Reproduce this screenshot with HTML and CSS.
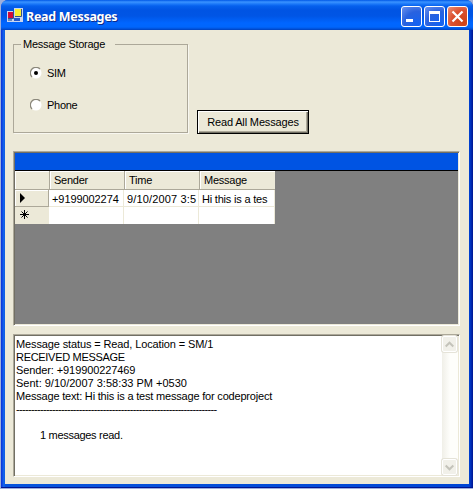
FILE: index.html
```html
<!DOCTYPE html>
<html lang="en">
<head>
<meta charset="utf-8">
<title>Read Messages</title>
<link rel="stylesheet" href="styles.css">
</head>
<body>
<div class="window">
  <header class="titlebar">
    <svg class="app-icon" width="16" height="16" viewBox="0 0 16 16">
      <path fill="#c9d5ef" d="M0 3h7V0h9v14H0z"/>
      <path fill="#d20a38" d="M1 4h5v6H1z"/>
      <path fill="#f8ee32" d="M8 1h6v7H8z"/>
      <path fill="#2558c8" d="M7 10h6v3H7z"/>
      <path fill="#6788bd" d="M1 11h4v2H1z"/>
      <path fill="none" stroke="#33518f" d="M6.500 3v7.500H1M14.500 1v7.500H8"/>
    </svg>
    <h1 class="title">Read Messages</h1>
    <div class="controls">
      <span class="control"><svg width="19" height="19"><path fill="#fff" d="M4 12h7v3H4z"/></svg></span>
      <span class="control"><svg width="19" height="19"><path fill="#fff" fill-rule="evenodd" d="M4 4h11v11H4zM5 7v7h9V7z"/></svg></span>
      <span class="control close"><svg width="19" height="19"><path stroke="#fff" stroke-width="2.200" d="M4.500 4.500l10 10m0-10l-10 10"/></svg></span>
    </div>
  </header>
  <main class="client">
    <section class="top">
      <fieldset class="group">
        <legend><span class="storage">Message Storage</span></legend>
        <label class="option"><svg width="12" height="12" viewBox="0 0 12 12"><circle cx="6" cy="6" r="5.500" fill="#fff"/><path d="M2 10a5.500 5.500 0 0 1 8-8" fill="none" stroke="#8b887c" stroke-width="1.300"/><circle cx="6" cy="6" r="2" fill="#000"/></svg><span class="sim">SIM</span></label>
        <label class="option"><svg width="12" height="12" viewBox="0 0 12 12"><circle cx="6" cy="6" r="5.500" fill="#fff"/><path d="M2 10a5.500 5.500 0 0 1 8-8" fill="none" stroke="#8b887c" stroke-width="1.300"/></svg><span class="phone">Phone</span></label>
      </fieldset>
      <button class="read"><span class="read-text">Read All Messages</span></button>
    </section>
    <section class="grid">
      <div class="caption"></div>
      <div class="table">
        <div class="head first"></div><div class="head"><span class="t-sender">Sender</span></div><div class="head"><span class="t-time">Time</span></div><div class="head"><span class="t-message">Message</span></div>
        <div class="mark"><svg width="5" height="10"><path d="M0 0l5 5-5 5z"/></svg></div><div class="cell"><span class="v-sender">+9199002274</span></div><div class="cell"><span class="v-time">9/10/2007 3:5</span></div><div class="cell"><span class="v-message">Hi this is a tes</span></div>
        <div class="mark last"><svg width="9" height="9"><path stroke="#000" d="M4.500 0v9M0 4.500h9M1.500 1.500l6 6m0-6l-6 6"/></svg></div><div class="cell last"></div><div class="cell last"></div><div class="cell last"></div>
      </div>
    </section>
    <section class="log">
      <div class="lines">
        <p><span class="l1">Message status = Read, Location = SM/1</span></p>
        <p><span class="l2">RECEIVED MESSAGE</span></p>
        <p><span class="l3">Sender: +919900227469</span></p>
        <p><span class="l4">Sent: 9/10/2007 3:58:33 PM +0530</span></p>
        <p><span class="l5">Message text: Hi this is a test message for codeproject</span></p>
        <p><span class="l6">-------------------------------------------------------------------</span></p>
        <p>&nbsp;</p>
        <p class="indent"><span class="l7">1 messages read.</span></p>
      </div>
      <div class="scroll">
        <span class="arrow"><svg width="9" height="7"><path d="M.7 5.500l3.800-3.800 3.800 3.800" fill="none" stroke="#c4c3ba" stroke-width="2"/></svg></span>
        <span class="arrow"><svg width="9" height="7"><path d="M.7 1.500l3.800 3.800 3.800-3.800" fill="none" stroke="#c4c3ba" stroke-width="2"/></svg></span>
      </div>
    </section>
  </main>
</div>
</body>
</html>
```
FILE: styles.css
```css
* { box-sizing: border-box; }
body {
  margin: 0;
  width: 473px;
  height: 489px;
  overflow: hidden;
  background: #9eafdc;
  font: 11px/13px "Liberation Sans", Arial, sans-serif;
  color: #000;
}
p, h1 { margin: 0; }
svg { display: block; flex: none; }
span { white-space: pre; }
.window {
  width: 472px;
  height: 488px;
  margin-left: 1px;
  padding: 0 4px 4px;
  background: linear-gradient(90deg, #0831d9, #166aee 3px, #0855dd 4px, #0046d5 468px, #0038c8 469px, #001590);
  border-bottom: 1px solid #001590;
  border-radius: 7px 7px 0 0;
}
.titlebar {
  height: 30px;
  margin: 0 -4px;
  padding: 1px 5px 0 6px;
  display: flex;
  align-items: center;
  border-radius: 7px 7px 0 0;
  background: linear-gradient(#0058e6 0, #3a93ff 2px, #1b78f8 4px, #0560ed 6px, #0054e3 10px, #0055e5 16px, #0066ff 23px, #0066fc 27px, #0050d8 29px, #003fb8 30px);
}
.title {
  margin: 2px 0 0 3px;
  font: bold 12.5px/16px "Noto Sans", "DejaVu Sans", sans-serif;
  letter-spacing: -0.3px;
  color: #fff;
  text-shadow: 1px 1px #0a2b8c;
  white-space: nowrap;
}
.controls { display: flex; gap: 2px; margin-left: auto; margin-top: 2px; }
.control {
  width: 21px;
  height: 21px;
  border: 1px solid #fff;
  border-radius: 3px;
  background: radial-gradient(circle at 80% 90%, #1463f2, #2962df 55%, #6a91ee);
}
.close { background: radial-gradient(circle at 80% 80%, #d04416, #dc5130 55%, #ec9278); }
.client {
  height: 454px;
  padding: 8px 9px 7px 8px;
  display: flex;
  flex-direction: column;
  background: #ece9d8;
}
.top { display: flex; height: 113px; align-items: flex-start; }
.group {
  width: 175px;
  height: 95px;
  margin: 0;
  padding: 15px 0 0 16px;
  border: 1px solid #aca899;
  box-shadow: 1px 1px #f8f7f0;
  min-width: 0;
}
legend { margin-left: -9px; padding: 0 7px 0 2px; width: 94px; height: 13px; }
.option { display: flex; align-items: center; gap: 5px; height: 14px; margin-bottom: 18px; }
.read {
  width: 112px;
  height: 24px;
  margin: 72px 0 0 9px;
  padding: 0;
  border: 1px solid #000;
  background: #ece9d8;
  box-shadow: inset 1px 1px #fff, inset -1px -1px #716f64, inset -2px -2px #aca899;
  font: inherit;
  color: inherit;
}
.grid {
  height: 175px;
  border: 1px solid #aca899;
  border-right-color: #fff;
  border-bottom-color: #fff;
  box-shadow: inset 1px 1px #716f64, inset -1px -1px #ece9d8;
  background: #808080;
  padding: 1px;
}
.caption { height: 18px; background: #0054e3; border-bottom: 1px solid #000; }
.table { display: grid; grid-template-columns: 34px 75px 75px 76px; grid-template-rows: 19px 17px 17px; width: 260px; }
.head { display: flex; align-items: center; padding-left: 4px; background: #ece9d8; border-left: 1px solid #aca899; border-bottom: 1px solid #aca899; box-shadow: inset 1px 1px #fff; }
.head.first { border-left: 0; }
.cell { display: flex; align-items: center; padding: 2px 0 0 3px; overflow: hidden; background: #fff; border-right: 1px solid #ece9d8; border-bottom: 1px solid #ece9d8; }
.mark { display: flex; align-items: center; padding-left: 5px; background: #ece9d8; border-right: 1px solid #aca899; border-bottom: 1px solid #aca899; box-shadow: inset 1px 1px #fff; }
.last { border-bottom: 0; }
.mark.last { padding-bottom: 2px; border-right: 0; box-shadow: none; }
.log {
  height: 143px;
  margin-top: 8px;
  display: flex;
  background: #fff;
  border: 1px solid #aca899;
  border-right-color: #fff;
  border-bottom-color: #fff;
  box-shadow: inset 1px 1px #716f64, inset -1px -1px #ece9d8;
  padding: 1px;
}
.lines { flex: 1; padding: 2px 0 0 1px; }
.indent { padding-left: 24px; }
.scroll { width: 16px; display: flex; flex-direction: column; justify-content: space-between; background: linear-gradient(90deg, #f0efe8, #fefefb 50%); }
.arrow { width: 15px; height: 16px; display: flex; align-items: center; justify-content: center; background: #f1f0e9; border: 1px solid #fff; border-radius: 2px; box-shadow: 0 0 0 1px #e5e3d8; }

.storage, .sim, .phone { letter-spacing: -0.28px; }
.read-text { letter-spacing: -0.15px; }
.t-sender, .t-time, .t-message { letter-spacing: -0.25px; }
.v-sender { letter-spacing: -0.08px; }
.v-time { letter-spacing: 0.15px; }
.v-message { letter-spacing: -0.2px; }
.l1 { letter-spacing: -0.12px; }
.l2 { letter-spacing: -0.3px; }
.l3 { letter-spacing: -0.1px; }
.l5 { letter-spacing: -0.19px; }
.l6 { letter-spacing: -0.67px; }
.l7 { letter-spacing: -0.3px; }
```
